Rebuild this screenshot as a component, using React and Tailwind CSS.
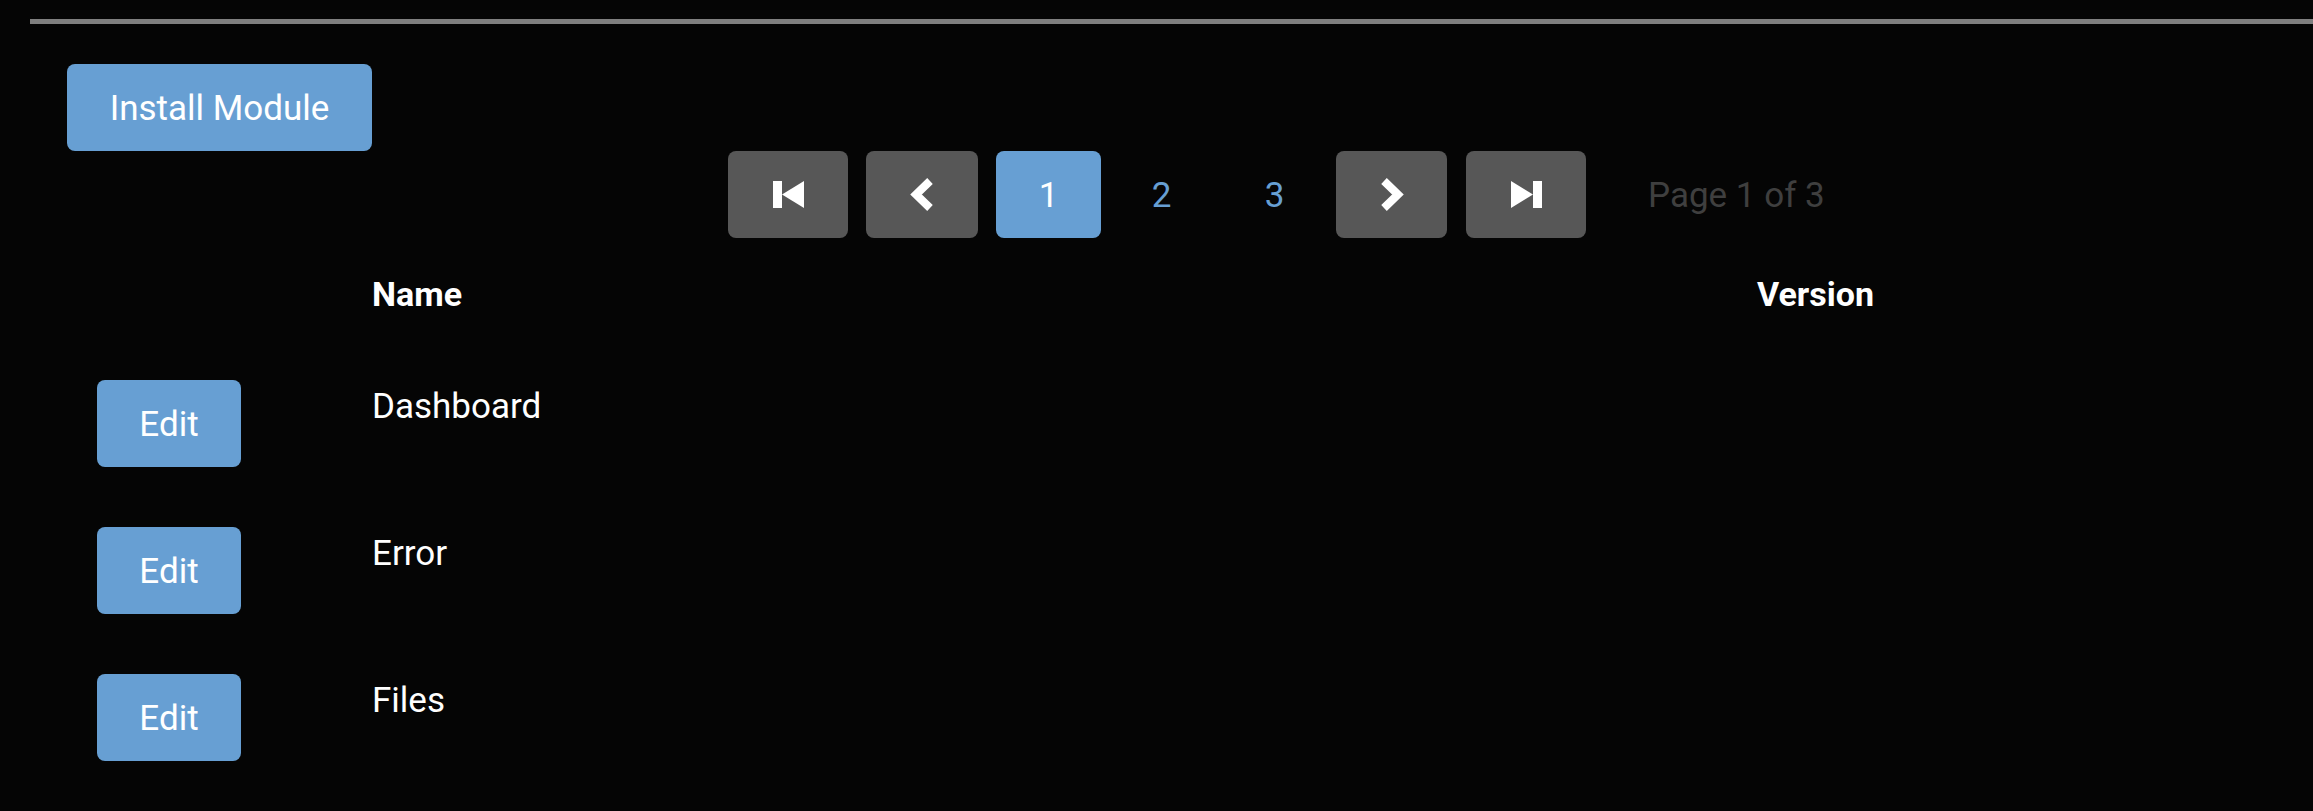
import React from 'react';

const modules = ['Dashboard', 'Error', 'Files'];

// Pagination glyphs
const FirstIcon = () => (
  <svg width="31" height="27" viewBox="0 0 31 27" fill="white">
    <rect x="0" y="0" width="9" height="27" />
    <polygon points="9,13.5 31,0 31,27" />
  </svg>
);

const LastIcon = () => (
  <svg width="31" height="27" viewBox="0 0 31 27" fill="white">
    <polygon points="0,0 22,13.5 0,27" />
    <rect x="22" y="0" width="9" height="27" />
  </svg>
);

const Chevron = ({ flip }) => (
  <svg width="24" height="35" viewBox="0 0 24 35" className={flip ? 'scale-x-[-1]' : ''}>
    <path d="M20 4 L6 17.5 L20 31" fill="none" stroke="white" strokeWidth="8" strokeLinejoin="miter" strokeLinecap="butt" />
  </svg>
);

export default function App() {
  return (
    <div className="min-h-screen bg-[#050505] text-white font-['Roboto',sans-serif]">
      <div className="pl-[30px] pt-[19px]">
        <div className="h-[5px] bg-[#7f7f7f]" />
      </div>

      <div className="pl-[67px] pt-[40px]">
        <button className="h-[87px] w-[305px] pt-[2px] rounded-[8px] bg-[#679fd3] text-[35px] leading-[40px] text-white">
          Install Module
        </button>
      </div>

      {/* Pagination */}
      <div className="flex items-center h-[87px] pl-[728px]">
        <button className="flex items-center justify-center w-[120px] h-[87px] rounded-[8px] bg-[#575757]">
          <FirstIcon />
        </button>
        <button className="ml-[18px] flex items-center justify-center w-[112px] h-[87px] rounded-[8px] bg-[#575757]">
          <Chevron />
        </button>
        <button className="ml-[18px] w-[105px] h-[87px] pt-[2px] rounded-[8px] bg-[#679fd3] text-[35px] leading-[40px] text-white">1</button>
        <button className="ml-[8px] w-[105px] h-[87px] pt-[2px] text-[35px] leading-[40px] text-[#679fd3]">2</button>
        <button className="ml-[8px] w-[105px] h-[87px] pt-[2px] text-[35px] leading-[40px] text-[#679fd3]">3</button>
        <button className="ml-[9px] flex items-center justify-center w-[111px] h-[87px] rounded-[8px] bg-[#575757]">
          <Chevron flip />
        </button>
        <button className="ml-[19px] flex items-center justify-center w-[120px] h-[87px] rounded-[8px] bg-[#575757]">
          <LastIcon />
        </button>
        <span className="ml-[62px] mt-[3px] text-[35px] leading-[40px] text-[#3f3f3f]">Page 1 of 3</span>
      </div>

      {/* Module table */}
      <div className="pl-[97px] pt-[36px]">
        <div className="grid grid-cols-[275px_1385px_1fr] text-[34px] leading-[40px] font-bold">
          <div />
          <div>Name</div>
          <div>Version</div>
        </div>
        <div className="mt-[66px] flex flex-col gap-[60px]">
          {modules.map((m) => (
            <div key={m} className="grid grid-cols-[275px_1385px_1fr] items-start">
              <div>
                <button className="w-[144px] h-[87px] pt-[2px] rounded-[8px] bg-[#679fd3] text-[35px] leading-[40px] text-white">Edit</button>
              </div>
              <div className="pt-[7px] text-[35px] leading-[40px]">{m}</div>
              <div />
            </div>
          ))}
        </div>
      </div>
    </div>
  );
}
